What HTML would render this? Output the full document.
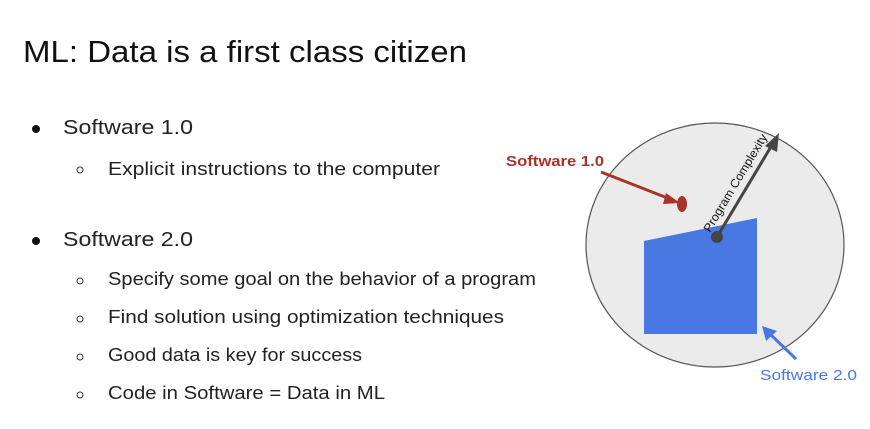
<!DOCTYPE html>
<html><head><meta charset="utf-8"><style>
html,body{margin:0;padding:0;background:#fff;}
svg{display:block;font-family:"Liberation Sans",sans-serif;}
</style></head><body>
<svg width="870" height="429" viewBox="0 0 870 429" xmlns="http://www.w3.org/2000/svg">
<rect width="870" height="429" fill="#fff"/>
<text x="23" y="62" font-size="31" fill="#111" textLength="444" lengthAdjust="spacingAndGlyphs">ML: Data is a first class citizen</text>
<circle cx="36" cy="129" r="4" fill="#111"/>
<text x="63" y="134" font-size="20" fill="#222" textLength="130" lengthAdjust="spacingAndGlyphs">Software 1.0</text>
<circle cx="80" cy="170" r="3" fill="none" stroke="#333" stroke-width="1"/>
<text x="108" y="175" font-size="18" fill="#222" textLength="332" lengthAdjust="spacingAndGlyphs">Explicit instructions to the computer</text>
<circle cx="36" cy="241" r="4" fill="#111"/>
<text x="63" y="246" font-size="20" fill="#222" textLength="130" lengthAdjust="spacingAndGlyphs">Software 2.0</text>
<circle cx="80" cy="281" r="3" fill="none" stroke="#333" stroke-width="1"/>
<text x="108" y="285" font-size="18" fill="#222" textLength="428" lengthAdjust="spacingAndGlyphs">Specify some goal on the behavior of a program</text>
<circle cx="80" cy="319" r="3" fill="none" stroke="#333" stroke-width="1"/>
<text x="108" y="323" font-size="18" fill="#222" textLength="396" lengthAdjust="spacingAndGlyphs">Find solution using optimization techniques</text>
<circle cx="80" cy="357" r="3" fill="none" stroke="#333" stroke-width="1"/>
<text x="108" y="361" font-size="18" fill="#222" textLength="254" lengthAdjust="spacingAndGlyphs">Good data is key for success</text>
<circle cx="80" cy="395" r="3" fill="none" stroke="#333" stroke-width="1"/>
<text x="108" y="399" font-size="18" fill="#222" textLength="277" lengthAdjust="spacingAndGlyphs">Code in Software = Data in ML</text>

<ellipse cx="715" cy="245" rx="129" ry="122" fill="#ebebeb" stroke="#555" stroke-width="1.2"/>
<polygon points="644,241 757,218 757,334 644,334" fill="#4a78e2"/>
<line x1="717" y1="237" x2="772" y2="145" stroke="#444" stroke-width="3"/>
<polygon points="779,133 765,146 777,152" fill="#444"/>
<circle cx="717" cy="237" r="6" fill="#444"/>
<text transform="translate(710,233) rotate(-59)" font-size="12" fill="#111" textLength="112" lengthAdjust="spacingAndGlyphs">Program Complexity</text>
<line x1="601" y1="172" x2="670" y2="199" stroke="#a9322a" stroke-width="3"/>
<polygon points="680,203 666,193 663,204" fill="#a9322a"/>
<ellipse cx="682" cy="204" rx="5" ry="8" fill="#a9322a"/>
<text x="506" y="166" font-size="15" font-weight="bold" fill="#a9322a" textLength="98" lengthAdjust="spacingAndGlyphs">Software 1.0</text>
<line x1="796" y1="359" x2="770" y2="334" stroke="#4a78e2" stroke-width="3"/>
<polygon points="762,326 766,341 777,331" fill="#4a78e2"/>
<text x="760" y="380" font-size="15" fill="#4a78e2" textLength="97" lengthAdjust="spacingAndGlyphs">Software 2.0</text>
</svg>
</body></html>
